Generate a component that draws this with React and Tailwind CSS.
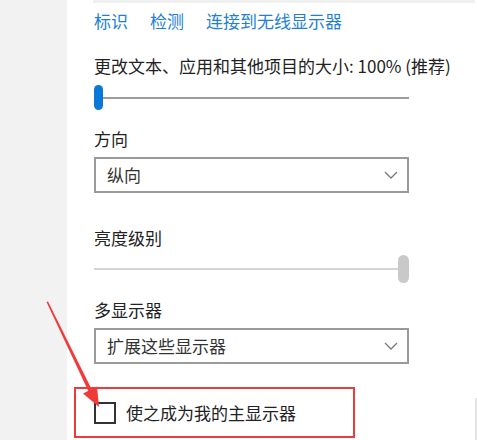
import React from "react";

const font = { fontFamily: '"Noto Sans CJK SC", "Noto Sans", sans-serif' };

function Chevron() {
  return (
    <svg width="14" height="8" viewBox="0 0 14 8" fill="none">
      <path d="M1 1 L7 7 L13 1" stroke="#7a7a7a" strokeWidth="1.3" />
    </svg>
  );
}

function Dropdown({ label }) {
  return (
    <div className="flex h-[36px] w-[315px] items-center justify-between border-2 border-[#9a9a9a] bg-white pl-[11px] pr-[9px]">
      <span className="text-[17px] leading-[24px] text-[#333]">{label}</span>
      <Chevron />
    </div>
  );
}

export default function App() {
  return (
    <div
      className="relative flex h-[440px] w-[477px] overflow-hidden bg-white"
      style={font}
    >
      <div className="w-[67px] shrink-0 bg-[#f2f2f2]" />
      <div className="flex flex-1 flex-col">
        <div className="ml-[26px] h-[3px] bg-[#f0f0f0]" />
        <div className="flex flex-col pl-[27px]">
          <div className="mt-[6px] flex h-[24px] gap-[22px] text-[17px] leading-[24px] text-[#1f7fd6]">
            <span>标识</span>
            <span>检测</span>
            <span>连接到无线显示器</span>
          </div>
          <div className="mt-[21px] h-[24px] whitespace-nowrap text-[17px] leading-[24px] text-[#222]">
            更改文本、应用和其他项目的大小: 100% (推荐)
          </div>
          <div className="mt-[7px] flex h-[25px] w-[315px] items-center">
            <div className="h-[25px] w-[9px] rounded-full bg-[#0a78d8]" />
            <div className="h-[2px] flex-1 bg-[#9c9c9c]" />
          </div>
          <div className="mt-[17px] h-[24px] text-[17px] leading-[24px] text-[#222]">
            方向
          </div>
          <div className="mt-[6px]">
            <Dropdown label="纵向" />
          </div>
          <div className="mt-[33px] h-[24px] text-[17px] leading-[24px] text-[#222]">
            亮度级别
          </div>
          <div className="mt-[5px] flex h-[28px] w-[315px] items-center">
            <div className="h-[2px] flex-1 bg-[#d4d4d4]" />
            <div className="h-[28px] w-[11px] rounded-full bg-[#c9c9c9]" />
          </div>
          <div className="mt-[15px] h-[24px] text-[17px] leading-[24px] text-[#222]">
            多显示器
          </div>
          <div className="mt-[6px]">
            <Dropdown label="扩展这些显示器" />
          </div>
          <div className="ml-[-20px] mt-[23px] flex h-[51px] w-[281px] items-center border-2 border-[#ec3b3b] pl-[18px]">
            <div className="h-[22px] w-[22px] border-2 border-[#333]" />
            <span className="ml-[10px] text-[17px] leading-[24px] text-[#222]">
              使之成为我的主显示器
            </span>
          </div>
        </div>
      </div>
      <div className="flex w-[2px] shrink-0 flex-col">
        <div className="mt-[398px] h-[42px] bg-[#e4e4e4]" />
      </div>
      <svg
        className="pointer-events-none absolute left-0 top-0"
        width="477"
        height="440"
        viewBox="0 0 477 440"
      >
        <polygon points="46.5,302 48,301.5 92,390 88.5,391.5" fill="#f03a3a" />
        <polygon points="83,393.5 97,386.5 99,407" fill="#f03a3a" />
      </svg>
    </div>
  );
}
